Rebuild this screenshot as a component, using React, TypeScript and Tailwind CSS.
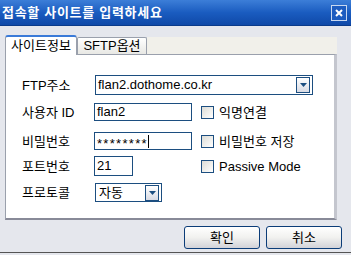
import React from 'react';

const FONT = { fontFamily: '"Liberation Sans", "Noto Sans CJK KR", sans-serif' };

// small dropdown arrow button used in the combo boxes
const DropBtn: React.FC = () => (
    <div className="w-[14px] h-[16px] border border-[#1c4e80] bg-gradient-to-b from-white to-[#d8dbe4] flex items-center justify-center">
        <svg width="7" height="4" viewBox="0 0 7 4">
            <polygon points="0,0 7,0 3.5,4" fill="#1c4e80" />
        </svg>
    </div>
);

const CheckBox: React.FC<{ label: string }> = ({ label }) => (
    <div className="flex items-center gap-[5px]">
        <div className="w-[13px] h-[13px] border border-[#1c4e80] bg-gradient-to-br from-[#dcdcd6] to-white" />
        <span className="text-[13px] text-black leading-none">{label}</span>
    </div>
);

const Label: React.FC<{ text: string }> = ({ text }) => (
    <div className="w-[72px] text-[13px] text-black leading-none">{text}</div>
);

const Btn: React.FC<{ text: string }> = ({ text }) => (
    <div className="w-[76px] h-[23px] rounded-[3px] border border-[#0b3c78] bg-gradient-to-b from-white via-[#f1f1ef] to-[#d2d2d8] flex items-center justify-center text-[13px] text-black">
        {text}
    </div>
);

export default function App() {
    return (
        <div className="w-[351px] h-[255px] bg-[#e5e7ed] flex flex-col overflow-hidden" style={FONT}>
            {/* title bar */}
            <div className="h-[26px] bg-gradient-to-b from-[#3c7ed8] via-[#1a5cc0] to-[#0f49a8] border-b border-[#0a3a8a] flex items-center justify-between pl-[2px] pr-[4px]">
                <span className="text-white text-[13px] font-bold tracking-[0.7px]">접속할 사이트를 입력하세요</span>
                <div className="w-[16px] h-[16px] border border-[#c8d8f0] bg-[#1d5cc0] flex items-center justify-center">
                    <svg width="8" height="8" viewBox="0 0 8 8">
                        <path d="M1 1 L7 7 M7 1 L1 7" stroke="white" strokeWidth="2" />
                    </svg>
                </div>
            </div>

            <div className="flex-1 flex flex-col px-[5px] pt-[8px]">
                {/* tabs */}
                <div className="h-[20px] flex items-end bg-[#e5e7ed] mr-[9px]">
                    <div className="w-[72px] h-[20px] bg-white border-t-2 border-t-[#3a7ad8] border-x border-x-[#9aa0ac] rounded-t-[3px] flex items-center justify-center text-[13px] text-black -mb-[1px] z-10">
                        사이트정보
                    </div>
                    <div className="w-[70px] h-[17px] bg-gradient-to-b from-white to-[#e8e8e4] border border-[#9aa0ac] border-b-0 rounded-t-[2px] flex items-center justify-center text-[13px] text-black">
                        SFTP옵션
                    </div>
                    <div className="flex-1 h-[17px] bg-[#f1f0ea]" />
                </div>

                {/* panel */}
                <div className="h-[166px] mr-[9px] bg-white border-l border-t border-[#9aa0ac] border-r-[3px] border-r-[#c4c6ce] border-b-2 border-b-[#888a98] pl-[16px] pt-[20px] flex flex-col">
                    <div className="flex items-center h-[20px]">
                        <Label text="FTP주소" />
                        <div className="ml-[1px] w-[218px] h-[20px] border border-[#1c4e80] flex items-center justify-between pl-[2px] pr-[2px]">
                            <span className="text-[13px] text-black">flan2.dothome.co.kr</span>
                            <DropBtn />
                        </div>
                    </div>

                    <div className="flex items-center h-[18px] mt-[8px]">
                        <Label text="사용자 ID" />
                        <div className="w-[98px] h-[18px] border border-[#1c4e80] flex items-center pl-[2px] text-[13px] text-black">flan2</div>
                        <div className="ml-[9px]"><CheckBox label="익명연결" /></div>
                    </div>

                    <div className="flex items-center h-[18px] mt-[11px]">
                        <Label text="비밀번호" />
                        <div className="w-[98px] h-[18px] border border-[#1c4e80] flex items-center pl-[2px] text-[13px] text-black">
                            <span className="leading-none pt-[4px] tracking-[1.3px]">********</span>
                            <span className="w-px h-[13px] bg-black" />
                        </div>
                        <div className="ml-[9px]"><CheckBox label="비밀번호 저장" /></div>
                    </div>

                    <div className="flex items-center h-[20px] mt-[6px]">
                        <Label text="포트번호" />
                        <div className="w-[39px] h-[20px] border border-[#1c4e80] flex items-center pl-[2px] text-[13px] text-black">21</div>
                        <div className="ml-[68px]"><CheckBox label="Passive Mode" /></div>
                    </div>

                    <div className="flex items-center h-[19px] mt-[7px]">
                        <Label text="프로토콜" />
                        <div className="ml-[1px] w-[67px] h-[19px] border border-[#1c4e80] flex items-center justify-between pl-[3px] pr-[2px]">
                            <span className="text-[13px] text-black">자동</span>
                            <DropBtn />
                        </div>
                    </div>
                </div>

                {/* buttons */}
                <div className="flex justify-end gap-[6px] mt-[6px] mr-[4px]">
                    <Btn text="확인" />
                    <Btn text="취소" />
                </div>
            </div>

            <div className="h-[3px] border-t border-[#555] bg-[#e5e7ed]" />
        </div>
    );
}
